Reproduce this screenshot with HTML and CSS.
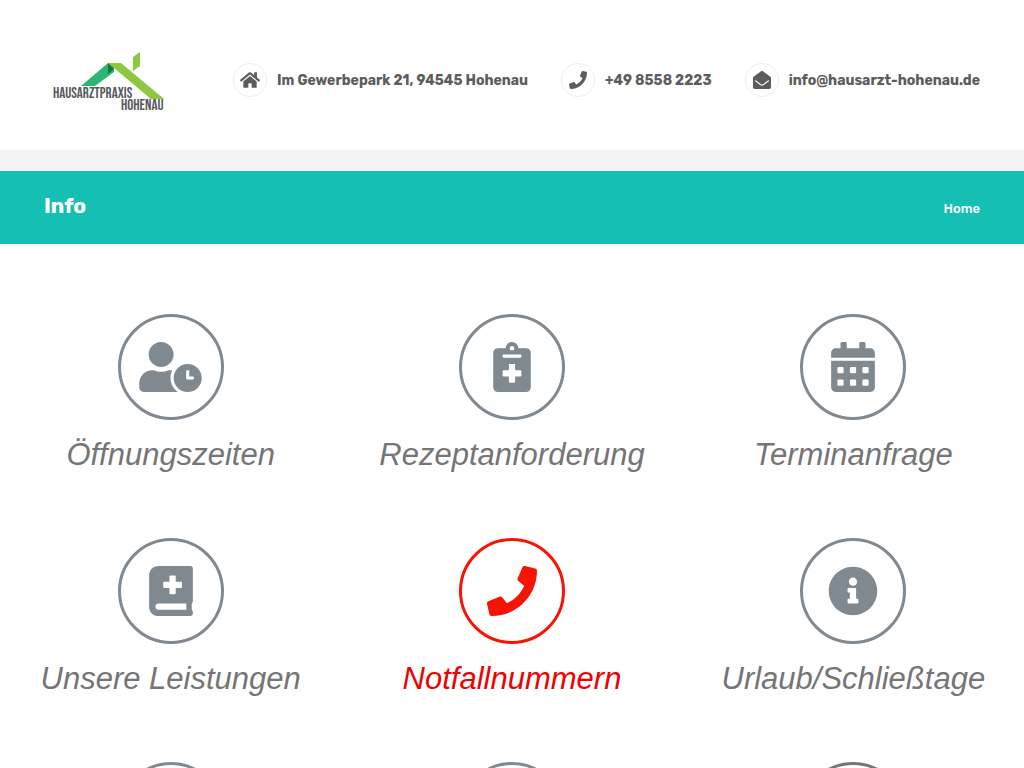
FILE: index.html
```html
<!DOCTYPE html>
<html lang="de">
<head>
    <meta charset="UTF-8">
    <title>Info - Hausarztpraxis Hohenau</title>
    <meta name="viewport" content="width=device-width, initial-scale=1.0">
    <link rel="stylesheet" href="styles.css">
</head>
<body>
    <header class="header">
        <a href="#" class="logo">
            <svg width="120" height="68" viewBox="50 46 120 68" role="img" aria-label="Hausarztpraxis Hohenau">
                <path fill="#2cb673" d="M81 86L108 63h6v9L95 86z"/>
                <path fill="#0b7a43" d="M108 63v11l6-5z"/>
                <path fill="#8cc940" d="M108 63h13l43 36h-13zM133 57l7-5v14l-7 5z"/>
                <text class="logo-text" x="53" y="98">HAUSARZTPRAXIS</text>
                <text class="logo-text" x="121" y="110">HOHENAU</text>
            </svg>
        </a>
        <ul class="contact">
            <li>
                <span class="contact-icon">
                    <svg width="20" height="18" viewBox="0 0 576 512"><path d="M280.37 148.26L96 300.11V464a16 16 0 0 0 16 16l112.06-.29a16 16 0 0 0 15.92-16V368a16 16 0 0 1 16-16h64a16 16 0 0 1 16 16v95.64a16 16 0 0 0 16 16.05L464 480a16 16 0 0 0 16-16V300L295.67 148.26a12.19 12.19 0 0 0-15.3 0zM571.6 251.47L488 182.56V44.05a12 12 0 0 0-12-12h-56a12 12 0 0 0-12 12v72.61L318.47 43a48 48 0 0 0-61 0L4.34 251.47a12 12 0 0 0-1.6 16.9l25.5 31A12 12 0 0 0 45.15 301l235.22-193.74a12.19 12.19 0 0 1 15.3 0L530.9 301a12 12 0 0 0 16.9-1.6l25.5-31a12 12 0 0 0-1.7-16.93z"/></svg>
                </span>
                <span>Im Gewerbepark 21, 94545 Hohenau</span>
            </li>
            <li>
                <span class="contact-icon">
                    <svg width="18" height="18" viewBox="0 0 512 512"><path d="M493.4 24.6l-104-24c-11.3-2.6-22.9 3.3-27.5 13.9l-48 112c-4.2 9.8-1.4 21.3 6.9 28l60.6 49.6c-36 76.7-98.9 140.5-177.2 177.2l-49.6-60.6c-6.8-8.3-18.2-11.1-28-6.9l-112 48C3.9 366.5-2 378.1.6 389.4l24 104C27.1 504.2 36.7 512 48 512c256.1 0 464-207.5 464-464 0-11.2-7.7-20.9-18.6-23.4z"/></svg>
                </span>
                <a href="tel:+4985582223">+49 8558 2223</a>
            </li>
            <li>
                <span class="contact-icon">
                    <svg width="18" height="18" viewBox="0 0 512 512"><path d="M512 464c0 26.51-21.49 48-48 48H48c-26.51 0-48-21.49-48-48V200.724a48 48 0 0 1 18.387-37.776c24.913-19.529 45.501-35.365 164.2-121.511C199.412 29.17 232.797-.347 256 .003c23.198-.354 56.596 29.172 73.413 41.433 118.687 86.137 139.303 101.995 164.2 121.512A48 48 0 0 1 512 200.724V464zm-65.666-196.605c-2.563-3.728-7.7-4.595-11.339-1.907-22.845 16.873-55.462 40.705-105.582 77.079-16.825 12.266-50.21 41.781-73.413 41.43-23.211.344-56.559-29.143-73.413-41.43-50.114-36.37-82.734-60.204-105.582-77.079-3.639-2.688-8.776-1.821-11.339 1.907l-9.072 13.196a7.998 7.998 0 0 0 1.839 10.967c22.887 16.899 55.454 40.69 105.303 76.868 20.274 14.781 56.524 47.813 92.264 47.573 35.724.242 71.961-32.771 92.263-47.573 49.85-36.179 82.418-59.97 105.303-76.868a7.998 7.998 0 0 0 1.839-10.967l-9.071-13.196z"/></svg>
                </span>
                <a href="mailto:info@hausarzt-hohenau.de">info@hausarzt-hohenau.de</a>
            </li>
        </ul>
    </header>

    <div class="nav-strip"></div>

    <div class="title-bar">
        <h1>Info</h1>
        <a href="#">Home</a>
    </div>

    <main class="tiles">
        <a href="#" class="tile">
            <span class="tile-icon">
                <svg width="63" height="50" viewBox="0 0 640 512"><path d="M496 224c-79.6 0-144 64.4-144 144s64.4 144 144 144 144-64.4 144-144-64.4-144-144-144zm64 150.3c0 5.3-4.4 9.7-9.7 9.7h-60.6c-5.3 0-9.7-4.4-9.7-9.7v-76.6c0-5.3 4.4-9.7 9.7-9.7h12.6c5.3 0 9.7 4.4 9.7 9.7V352h38.3c5.3 0 9.7 4.4 9.7 9.7v12.6zM320 368c0-27.8 6.7-54.1 18.2-77.5-8-1.5-16.2-2.5-24.6-2.5h-16.7c-22.2 10.2-46.9 16-72.9 16s-50.6-5.8-72.9-16h-16.7C60.2 288 0 348.2 0 422.4V464c0 26.5 21.5 48 48 48h347.1c-45.3-31.9-75.1-84.5-75.1-144zm-96-112c70.7 0 128-57.3 128-128S294.7 0 224 0 96 57.3 96 128s57.3 128 128 128z"/></svg>
            </span>
            <span class="tile-label">Öffnungszeiten</span>
        </a>
        <a href="#" class="tile">
            <span class="tile-icon">
                <svg width="38" height="50" viewBox="0 0 384 512"><path fill-rule="evenodd" d="M336 64h-80a64 64 0 0 0-128 0H48a48 48 0 0 0-48 48v352a48 48 0 0 0 48 48h288a48 48 0 0 0 48-48V112a48 48 0 0 0-48-48zM192 40a24 24 0 1 1 0 48 24 24 0 0 1 0-48zM104 128h176a8 8 0 0 1 8 8v16a8 8 0 0 1-8 8H104a8 8 0 0 1-8-8v-16a8 8 0 0 1 8-8zM168 224h48a8 8 0 0 1 8 8v56h56a8 8 0 0 1 8 8v48a8 8 0 0 1-8 8h-56v56a8 8 0 0 1-8 8h-48a8 8 0 0 1-8-8v-56h-56a8 8 0 0 1-8-8v-48a8 8 0 0 1 8-8h56v-56a8 8 0 0 1 8-8z"/></svg>
            </span>
            <span class="tile-label">Rezeptanforderung</span>
        </a>
        <a href="#" class="tile">
            <span class="tile-icon">
                <svg width="44" height="50" viewBox="0 0 448 512"><path fill-rule="evenodd" d="M0 464c0 26.5 21.5 48 48 48h352c26.5 0 48-21.5 48-48V192H0zM76 256h40a12 12 0 0 1 12 12v40a12 12 0 0 1-12 12H76a12 12 0 0 1-12-12v-40a12 12 0 0 1 12-12zM204 256h40a12 12 0 0 1 12 12v40a12 12 0 0 1-12 12h-40a12 12 0 0 1-12-12v-40a12 12 0 0 1 12-12zM332 256h40a12 12 0 0 1 12 12v40a12 12 0 0 1-12 12h-40a12 12 0 0 1-12-12v-40a12 12 0 0 1 12-12zM76 384h40a12 12 0 0 1 12 12v40a12 12 0 0 1-12 12H76a12 12 0 0 1-12-12v-40a12 12 0 0 1 12-12zM204 384h40a12 12 0 0 1 12 12v40a12 12 0 0 1-12 12h-40a12 12 0 0 1-12-12v-40a12 12 0 0 1 12-12zM332 384h40a12 12 0 0 1 12 12v40a12 12 0 0 1-12 12h-40a12 12 0 0 1-12-12v-40a12 12 0 0 1 12-12zM400 64h-48V16c0-8.8-7.2-16-16-16h-32c-8.8 0-16 7.2-16 16v48H160V16c0-8.8-7.2-16-16-16h-32c-8.8 0-16 7.2-16 16v48H48C21.5 64 0 85.5 0 112v48h448v-48c0-26.5-21.5-48-48-48z"/></svg>
            </span>
            <span class="tile-label">Terminanfrage</span>
        </a>
        <a href="#" class="tile">
            <span class="tile-icon">
                <svg width="44" height="50" viewBox="0 0 448 512"><path fill-rule="evenodd" d="M448 358.4V25.6c0-16-9.6-25.6-25.6-25.6H96C41.6 0 0 41.6 0 96v320c0 54.4 41.6 96 96 96h326.4c12.8 0 25.6-9.6 25.6-25.6v-16q0-9.6-9.6-19.2c-3.2-16-3.2-60.8 0-73.6q9.6-4.8 9.6-19.2zM144 168a8 8 0 0 1 8-8h56v-56a8 8 0 0 1 8-8h48a8 8 0 0 1 8 8v56h56a8 8 0 0 1 8 8v48a8 8 0 0 1-8 8h-56v56a8 8 0 0 1-8 8h-48a8 8 0 0 1-8-8v-56h-56a8 8 0 0 1-8-8zm236.8 280H96c-16 0-32-12.8-32-32s16-32 32-32h284.8z"/></svg>
            </span>
            <span class="tile-label">Unsere Leistungen</span>
        </a>
        <a href="#" class="tile emergency">
            <span class="tile-icon">
                <svg width="50" height="50" viewBox="0 0 512 512"><path d="M493.4 24.6l-104-24c-11.3-2.6-22.9 3.3-27.5 13.9l-48 112c-4.2 9.8-1.4 21.3 6.9 28l60.6 49.6c-36 76.7-98.9 140.5-177.2 177.2l-49.6-60.6c-6.8-8.3-18.2-11.1-28-6.9l-112 48C3.9 366.5-2 378.1.6 389.4l24 104C27.1 504.2 36.7 512 48 512c256.1 0 464-207.5 464-464 0-11.2-7.7-20.9-18.6-23.4z"/></svg>
            </span>
            <span class="tile-label">Notfallnummern</span>
        </a>
        <a href="#" class="tile">
            <span class="tile-icon">
                <svg width="50" height="50" viewBox="0 0 512 512"><path fill-rule="evenodd" d="M256 8C119.043 8 8 119.083 8 256c0 136.997 111.043 248 248 248s248-111.003 248-248C504 119.083 392.957 8 256 8zm0 110c23.196 0 42 18.804 42 42s-18.804 42-42 42-42-18.804-42-42 18.804-42 42-42zm56 254c0 6.627-5.373 12-12 12h-88c-6.627 0-12-5.373-12-12v-24c0-6.627 5.373-12 12-12h12v-64h-12c-6.627 0-12-5.373-12-12v-24c0-6.627 5.373-12 12-12h64c6.627 0 12 5.373 12 12v100h12c6.627 0 12 5.373 12 12v24z"/></svg>
            </span>
            <span class="tile-label">Urlaub/Schließtage</span>
        </a>
        <div class="tile"><span class="tile-icon"></span></div>
        <div class="tile"><span class="tile-icon"></span></div>
        <div class="tile dark"><span class="tile-icon"></span></div>
    </main>
</body>
</html>
```
FILE: styles.css
```css
body {
    margin: 0;
    background-color: #fff;
    font-family: "Rubik", "Inter", "Liberation Sans", sans-serif;
    color: #5c5c5c;
}

a {
    color: inherit;
    text-decoration: none;
}

svg {
    display: block;
    fill: currentColor;
}

/* Header with logo and contact details */
.header {
    display: flex;
    justify-content: space-between;
    align-items: center;
    padding: 46px 44px 36px 50px;
}

.logo-text {
    font-family: "Bebas Neue", "Liberation Sans", sans-serif;
    font-size: 15px;
    fill: #58595b;
}

.contact {
    display: flex;
    gap: 33px;
    margin: 0;
    padding: 0;
    list-style: none;
    font-size: 14px;
    font-weight: 700;
}

.contact li {
    display: flex;
    align-items: center;
    gap: 10px;
    white-space: nowrap;
}

.contact-icon {
    display: flex;
    justify-content: center;
    align-items: center;
    width: 32px;
    height: 32px;
    border: 1px solid #eee;
    border-radius: 50%;
}

.nav-strip {
    height: 21px;
    background-color: #f4f4f4;
}

/* Page title */
.title-bar {
    display: flex;
    justify-content: space-between;
    align-items: baseline;
    padding: 0 44px;
    background-color: #15bfb3;
    color: #fff;
    font-size: 13px;
    font-weight: 500;
    line-height: 70px;
}

.title-bar h1 {
    margin: 0;
    font-size: 21px;
    font-weight: 700;
}

/* Icon tiles */
.tiles {
    display: grid;
    grid-template-columns: repeat(3, 1fr);
    row-gap: 63px;
    padding-top: 70px;
}

.tile {
    display: flex;
    flex-direction: column;
    align-items: center;
    gap: 15px;
    color: #808990;
}

.tile-icon {
    display: flex;
    justify-content: center;
    align-items: center;
    width: 100px;
    height: 100px;
    border: 3px solid currentColor;
    border-radius: 50%;
}

.tile-label {
    font-family: "Liberation Sans", Arial, sans-serif;
    font-size: 31px;
    font-style: italic;
    line-height: 40px;
    color: #757575;
}

.emergency {
    color: #f81404;
}

.emergency .tile-label {
    color: #f00000;
}

.dark {
    color: #757575;
}
```
